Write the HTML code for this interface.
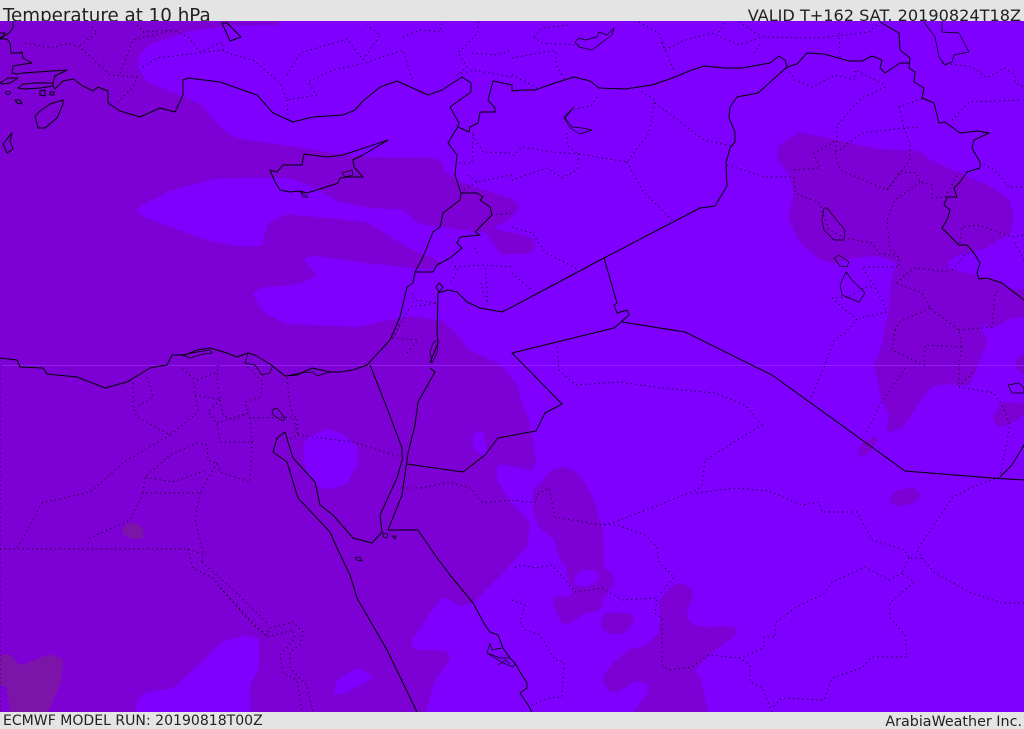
<!DOCTYPE html>
<html><head><meta charset="utf-8"><title>Temperature at 10 hPa</title>
<style>
html,body{margin:0;padding:0;background:#e4e4e4}
svg{display:block}
text{font-family:"DejaVu Sans",sans-serif;fill:#222}
.d path,.d ellipse{fill:#7d00d4;stroke:#7d00d4;stroke-width:2;stroke-linejoin:round}
.b path{fill:#7f00ff;stroke:#7f00ff;stroke-width:2;stroke-linejoin:round}
.g path{fill:#7d14aa;stroke:#7d14aa;stroke-width:2;stroke-linejoin:round}
.c path{fill:none;stroke:#000;stroke-width:1;stroke-linejoin:round}
.t path{fill:none;stroke:#000;stroke-width:.7;stroke-linejoin:round}
.p path{fill:none;stroke:#000;stroke-width:1;stroke-dasharray:1 3.6}
</style></head><body>
<svg width="1024" height="729" viewBox="0 0 1024 729" xmlns="http://www.w3.org/2000/svg">
<defs>
<filter id="s" filterUnits="userSpaceOnUse" x="-30" y="0" width="1084" height="740" color-interpolation-filters="sRGB">
<feGaussianBlur stdDeviation="2.2"/>
<feComponentTransfer><feFuncA type="linear" slope="7" intercept="-3"/></feComponentTransfer>
</filter>
</defs>
<rect width="1024" height="729" fill="#e4e4e4"/>
<text x="3" y="21.7" font-size="18.27">Temperature at 10 hPa</text>
<text x="1021" y="21" font-size="16.13" text-anchor="end">VALID T+162 SAT. 20190824T18Z</text>
<text x="3" y="725" font-size="14.06">ECMWF MODEL RUN: 20190818T00Z</text>
<text x="1022" y="726" font-size="14.3" text-anchor="end">ArabiaWeather Inc.</text>
<svg x="0" y="21" width="1024" height="691" viewBox="0 21 1024 691">
<rect x="0" y="21" width="1024" height="691" fill="#7f00ff"/>
<g class="d" filter="url(#s)">
<path d="M-12 12L280 12L280 24L230 25L190 30L150 43L138 55L136 66L145 82L170 92L200 105L213 120L225 133L240 140L290 147L350 157L400 159L430 158L441 162L444 172L460 183L490 193L512 200L519 206L512 217L498 224L489 228L490 238L505 252L530 253L536 246L530 238L510 233L492 230L488 233L496 245L512 254L500 253L488 232L470 230L420 223L403 209L370 207L337 200L317 188L290 177L240 177L213 178L170 190L140 205L134 210L140 216L170 228L213 243L240 247L267 247L263 240L270 223L287 215L317 218L367 223L383 233L410 250L440 262L432 268L400 266L367 262L317 255L300 257L316 275L300 283L260 287L251 293L263 313L287 325L360 328L383 322L413 317L443 322L455 333L467 350L500 365L516 385L522 405L529 422L535 458L532 470L512 465L495 463L497 482L507 498L512 505L529 522L527 545L512 562L473 602L460 605L443 595L430 612L410 642L413 650L447 652L450 658L433 682L425 712L425 722L252 722L250 688L260 668L260 638L247 634L223 640L200 662L173 687L143 692L135 702L137 722L-12 722Z"/>
<path d="M799 133L779 147L777 157L789 173L795 193L789 217L799 240L819 258L834 263L852 257L879 255L899 263L892 277L890 310L882 347L875 365L882 398L890 415L887 432L902 427L912 412L929 388L942 383L969 385L977 365L987 340L979 328L982 323L992 327L1012 317L1036 315L1036 290L1012 290L999 283L979 277L949 270L946 263L955 255L985 247L1010 233L1013 217L1009 200L989 187L955 172L929 160L919 152L879 150L832 140Z"/>
<path d="M1036 350L1018 358L1016 368L1036 382Z"/>
<path d="M1002 403L1036 405L1015 420L999 427L993 418Z"/>
<path d="M859 455L859 447L869 440L878 436L872 448L862 457Z"/>
<ellipse cx="905" cy="497" rx="15" ry="7.5" transform="rotate(-14 905 497)"/>
<path d="M562 468L550 472L545 480L534 490L534 512L540 527L554 538L560 557L567 568L569 582L574 585L575 592L569 598L554 597L554 605L562 623L570 622L585 612L599 610L604 595L614 583L610 573L603 568L602 528L592 498L582 480L572 470Z"/>
<path d="M607 613L629 614L634 620L625 632L612 634L604 630L601 622Z"/>
<path d="M682 584L672 587L659 602L662 618L659 635L645 647L629 650L612 665L603 678L610 692L619 690L635 680L649 683L649 693L627 722L710 722L702 690L700 677L692 672L705 657L725 642L738 632L732 627L702 628L689 623L685 615L692 598L690 588Z"/>
</g>
<g class="b" filter="url(#s)">
<path d="M328 430L308 438L304 448L307 472L320 487L333 488L347 482L357 462L357 448L343 435Z"/>
<path d="M480 430L473 438L475 450L487 457L483 435Z"/>
<path d="M335 693L337 682L357 669L373 677L353 688L340 694Z"/>
<path d="M575 583L578 574L584 571L596 571L598 578L592 584L580 586Z"/>
</g>
<g class="g" filter="url(#s)">
<path d="M123 528L132 523L142 528L143 538L132 538L123 533Z"/>
<path d="M-12 658L10 655L20 667L50 655L62 660L60 682L43 722L13 722L7 685L-12 682Z"/>
</g>
<rect x="0" y="365" width="1024" height="1" fill="#9a33ff" opacity=".6"/>
<g class="p">
<path d="M25 43L53 48L67 43L80 47L110 75L137 77L133 87L117 103"/>
<path d="M92 27L97 33L80 45"/>
<path d="M137 25L143 32L173 30L133 40L120 73"/>
<path d="M143 67L157 58L223 50L222 42L200 52L188 37L173 30"/>
<path d="M223 50L233 55L253 60L280 83L287 100L317 95L308 82L333 70L365 63L403 50L413 82"/>
<path d="M287 75L300 53L347 39L363 60L380 35L367 25"/>
<path d="M287 100L288 118"/>
<path d="M403 37L420 30L440 32L442 22"/>
<path d="M478 22L478 33L458 53L467 67L457 75L473 70L512 77"/>
<path d="M472 53L497 55L512 50"/>
<path d="M473 133L472 163L458 163"/><path d="M473 135L483 152L510 153"/>
<path d="M468 175L477 182L512 175"/><path d="M460 192L477 182"/>
<path d="M534 37L542 28L569 25"/><path d="M534 37L542 43L579 45"/>
<path d="M512 58L555 50L557 67L565 80"/>
<path d="M662 43L675 73"/>
<path d="M665 50L685 40L712 33L739 45L762 37L819 38L869 32L879 23"/>
<path d="M719 32L725 22"/><path d="M839 33L840 57"/>
<path d="M639 22L659 33L665 50"/><path d="M739 22L762 37"/>
<path d="M754 53L762 42"/>
<path d="M787 68L795 80L812 87L835 75L855 80L855 70L885 85"/>
<path d="M885 87L862 98L837 125L837 140L835 153L862 133L904 128L919 127"/>
<path d="M904 128L910 143L910 160L887 190L840 170L835 153"/>
<path d="M899 107L924 98"/><path d="M899 107L904 128"/>
<path d="M887 190L900 172L917 173L920 182L932 185L932 198L945 197L959 172"/>
<path d="M920 182L895 200L887 220L890 250L899 257L899 267L862 267L875 287L882 300L887 312L859 318"/>
<path d="M794 170L820 168L814 153L837 140"/>
<path d="M727 165L765 177L794 177L795 193L819 203L829 230L845 238L872 243L879 253L899 257"/>
<path d="M952 120L969 102L1022 100"/>
<path d="M942 63L972 67L987 78L1004 68L1015 75L1015 83L1024 87"/>
<path d="M980 162L994 170L1009 187L1024 187"/>
<path d="M960 243L962 227L979 225L1012 237L1024 235"/>
<path d="M952 270L965 255L974 252"/><path d="M1015 243L1024 260"/>
<path d="M897 283L922 293L930 308L959 330L962 347L959 365L959 387L994 393L1002 405L1010 425L1000 477"/>
<path d="M895 330L899 322L930 308"/><path d="M895 330L892 350L924 365L925 345L962 347"/>
<path d="M959 330L992 327L995 293L1000 290"/>
<path d="M897 283L907 273L915 268L949 272"/>
<path d="M832 298L857 320L845 333L834 340L825 365L810 400"/>
<path d="M832 298L849 297L865 287L875 287"/>
<path d="M905 368L880 405L865 435"/><path d="M959 387L975 370"/>
<path d="M557 347L559 370L575 385L619 382L662 388L715 393L745 405L762 425L705 460L702 485L697 490L615 522L600 525L555 517L549 488L537 495L535 503L512 500"/>
<path d="M697 493L735 488L769 491L802 505L819 502L822 512L857 512L872 540L905 550L909 558L922 558L917 550L952 498L972 487L1000 477"/>
<path d="M922 558L934 572L969 592L1002 603L1024 603"/>
<path d="M909 558L902 573L914 582L890 603L890 618L905 635L907 657L872 657L862 668L832 678L824 700L782 698L772 708"/>
<path d="M902 573L889 580L865 567L832 582L825 593L795 608L775 623L775 637L764 637L764 648L739 658L709 655L692 667L669 670L662 665L662 618L655 613L657 598L622 600L602 588L575 592L565 580L552 565L535 568L522 565L512 568"/>
<path d="M600 525L617 525L645 535L657 547L659 562L674 577L659 595"/>
<path d="M739 658L750 665L750 682L762 687L772 712"/>
<path d="M512 600L525 605L520 622L525 630L540 635L555 660L564 662L562 697L549 698L532 705"/>
<path d="M133 378L133 408L137 417L170 435L198 412L193 378L180 367"/>
<path d="M147 377L153 397L135 408"/>
<path d="M195 395L220 400L217 377L218 365"/>
<path d="M197 380L217 372"/>
<path d="M220 400L208 412L217 423L220 442L252 442L250 482L220 472L217 463L208 460L207 445L197 443L170 455L145 477L173 482L207 470"/>
<path d="M217 423L248 413L250 418L297 417L298 435L288 440"/>
<path d="M298 435L353 442L400 457"/>
<path d="M250 418L252 442"/>
<path d="M220 400L223 415L233 420L248 413L245 402L260 397L263 382L245 365"/>
<path d="M287 378L290 405L298 435"/>
<path d="M217 463L200 493L143 493L145 477"/>
<path d="M200 493L195 518L203 552L202 562"/>
<path d="M143 493L130 520L90 538L87 545"/>
<path d="M170 435L127 460L90 492L42 503L17 548"/>
<path d="M0 549L188 549L202 554"/>
<path d="M188 549L193 568L213 578L227 595L253 625L267 635L270 628L293 622L303 632L300 645L290 652L290 668L307 685L313 712"/>
<path d="M202 562L230 587L267 623"/>
<path d="M220 588L257 627L267 637L293 630L295 638L280 655L283 673L297 680L302 712"/>
<path d="M0 365L0 712"/>
<path d="M402 488L420 488L450 482L470 488L483 503L512 500"/>
<path d="M412 293L415 300L437 303L410 307L393 338L418 340L407 353"/>
<path d="M393 338L400 322"/>
<path d="M452 262L458 270L450 283"/><path d="M455 267L485 265L512 267"/>
<path d="M480 283L488 303L485 265"/><path d="M475 248L478 255"/>
<path d="M492 215L512 213"/>
<path d="M512 227L532 233L545 252L579 270"/>
<path d="M512 273L532 290"/>
<path d="M579 154L627 162L649 133L655 100L639 90"/>
<path d="M655 103L704 140L732 146"/>
<path d="M627 162L642 190L674 222"/>
<path d="M579 154L577 170L562 178L547 168L512 180"/>
<path d="M579 154L552 152L522 147L512 157"/>
<path d="M567 133L567 145L577 153"/>
<path d="M597 97L592 105L574 110"/>
<path d="M512 75L537 88"/>
</g>
<g class="c">
<path d="M13 21L13 28L9 33L0 39L7 39L10 43L11 53L20 53L22 52L23 58L32 63L25 64L13 66L12 73L17 74L23 73L67 70L55 76L53 83L53 86L55 89L63 81L73 79L83 86L93 91L98 87L108 91L108 103L120 111L130 114L140 117L160 108L175 112L183 95L183 80L188 78L220 82L257 95L273 113L293 122L313 117L343 115L355 110L362 102L380 87L397 81L428 95L442 90L462 77L471 83L471 92L450 107L459 123L457 128L448 143L457 155L455 175L461 193L460 200L443 213L440 227L433 232L423 257L415 272L413 283L407 287L400 317L390 340L367 365L353 370L340 372L330 372L312 368L297 375L285 376L270 364L255 355L248 353L237 357L227 353L210 348L197 350L185 355L172 355L167 365L160 366L150 368L127 382L105 388L77 377L47 374L43 368L20 367L17 360L0 358"/>
<path d="M461 193L477 193L483 197L480 200L490 207L492 215L475 232L480 235L460 237L457 243L462 248L450 258L437 265L433 272L415 272"/>
<path d="M438 293L437 333L438 343L430 363"/>
<path d="M438 293L448 290L457 292L467 302L480 308L502 312L512 307L604 258L700 208L715 206L727 186L726 163L730 148L735 142L735 132L729 118L730 107L737 97L758 93L787 67L785 60L779 56L770 63L742 68L725 68L704 66L689 71L675 77L652 85L625 89L599 88L590 81L574 77L555 83L535 90L522 90L512 91L512 85L493 81L488 100L495 108L495 112L480 112L478 123L470 127L469 132L458 127"/>
<path d="M604 258L617 303L614 305L617 313L627 310L629 315L614 328L512 353L562 404L545 413L536 431L498 438L485 455L463 472L407 464"/>
<path d="M622 322L685 332L772 375L905 471L992 478L1024 480"/>
<path d="M1000 477L1012 465L1024 445"/>
<path d="M370 365L387 408L402 448L402 457"/>
<path d="M403 457L397 478L380 515L382 532L372 543L353 538L333 515L320 505L315 482L293 458L285 432L277 438L273 452L287 462L298 498L330 532L337 548L350 575L357 598L387 650L417 712"/>
<path d="M408 453L402 495L390 525L388 530L418 530L435 555L450 575L473 603L485 625L490 632L498 635L503 648L510 658L515 663L520 672L527 683L527 688L520 693L528 705L532 712"/>
<path d="M430 368L435 372L418 402L415 425L408 453"/>
<path d="M787 67L797 64L807 53L824 54L849 61L862 61L872 56L882 60L880 68L885 73L900 63L909 63"/>
<path d="M880 22L899 33L900 50L910 58L909 68L915 72L914 82L924 88L922 98L934 103L939 123L945 122L960 133L977 131L989 133L974 140L972 148L980 162L980 168L967 172L960 182L954 188L957 197L947 197L944 205L950 210L947 220L942 228L959 245L967 245L974 253L980 263L977 273L979 279L987 278L1002 283L1024 300"/>
<path d="M18 88L23 84L35 83L53 83L53 86L40 88L25 89Z"/>
<path d="M0 83L8 78L18 78L10 83L2 84Z"/>
<path d="M0 33L5 33L3 36L0 38"/>
<path d="M270 170L277 172L283 165L302 165L304 154L327 157L343 155L388 140L363 155L353 160L354 167L363 177L347 177L340 178L338 183L323 188L307 193L300 191L290 192L280 190L275 182Z"/>
<path d="M63 100L50 104L40 111L35 116L38 128L45 128L57 118L63 104Z"/>
<path d="M12 133L7 139L3 144L7 153L13 149L10 141Z"/>
<path d="M222 23L227 23L241 37L230 41Z"/>
<path d="M439 283L443 287L439 292L436 287Z"/>
<ellipse cx="8" cy="93" rx="2.5" ry="1.5" fill="none" stroke="#000" stroke-width=".8"/>
<path d="M15 100L20 100L22 104L17 103Z"/>
<path d="M40 91L45 90L45 96L40 95Z"/>
<path d="M50 92L54 92L54 95L50 95Z"/>
</g>
<g class="t">
<path d="M574 107L565 118L572 127L582 128L592 130L580 134L570 128L564 117Z"/>
<path d="M824 208L822 220L824 230L834 240L844 240L845 230L839 223L827 208Z"/>
<path d="M834 258L839 255L849 262L847 267L840 266Z"/>
<path d="M846 272L840 285L842 295L859 302L865 293L852 280Z"/>
<path d="M924 22L935 37L939 57L945 65L952 62L954 55L969 52L959 33L942 32L942 22"/>
<path d="M575 42L579 38L585 40L597 37L599 32L607 35L614 28L612 35L605 40L592 50L579 47Z"/>
<path d="M272 410L277 408L285 418L283 421L273 415Z"/>
<path d="M355 558L360 557L362 561L357 560Z"/>
<path d="M383 533L388 534L387 538L383 537Z"/><path d="M392 536L396 536L395 539Z"/>
<path d="M433 343L438 340L437 353L432 363L430 352Z"/>
<path d="M182 355L197 352L210 350L212 353L203 354L190 358Z"/>
<path d="M248 353L245 363L255 365L262 375L270 373L272 367"/>
<path d="M287 376L300 373L313 372L317 376L330 372"/>
<path d="M342 173L352 170L353 175L345 177Z"/>
<path d="M300 191L305 195L308 197L303 197Z"/>
<path d="M1008 385L1019 383L1024 388L1024 393L1012 393Z"/>
<path d="M490 643L487 653L503 663L513 667L515 663"/>
<path d="M487 653L500 658L510 658"/>
<path d="M490 643L492 650L502 648"/>
<path d="M498 665L505 660L510 664"/>
</g>
</svg>
</svg>
</body></html>
